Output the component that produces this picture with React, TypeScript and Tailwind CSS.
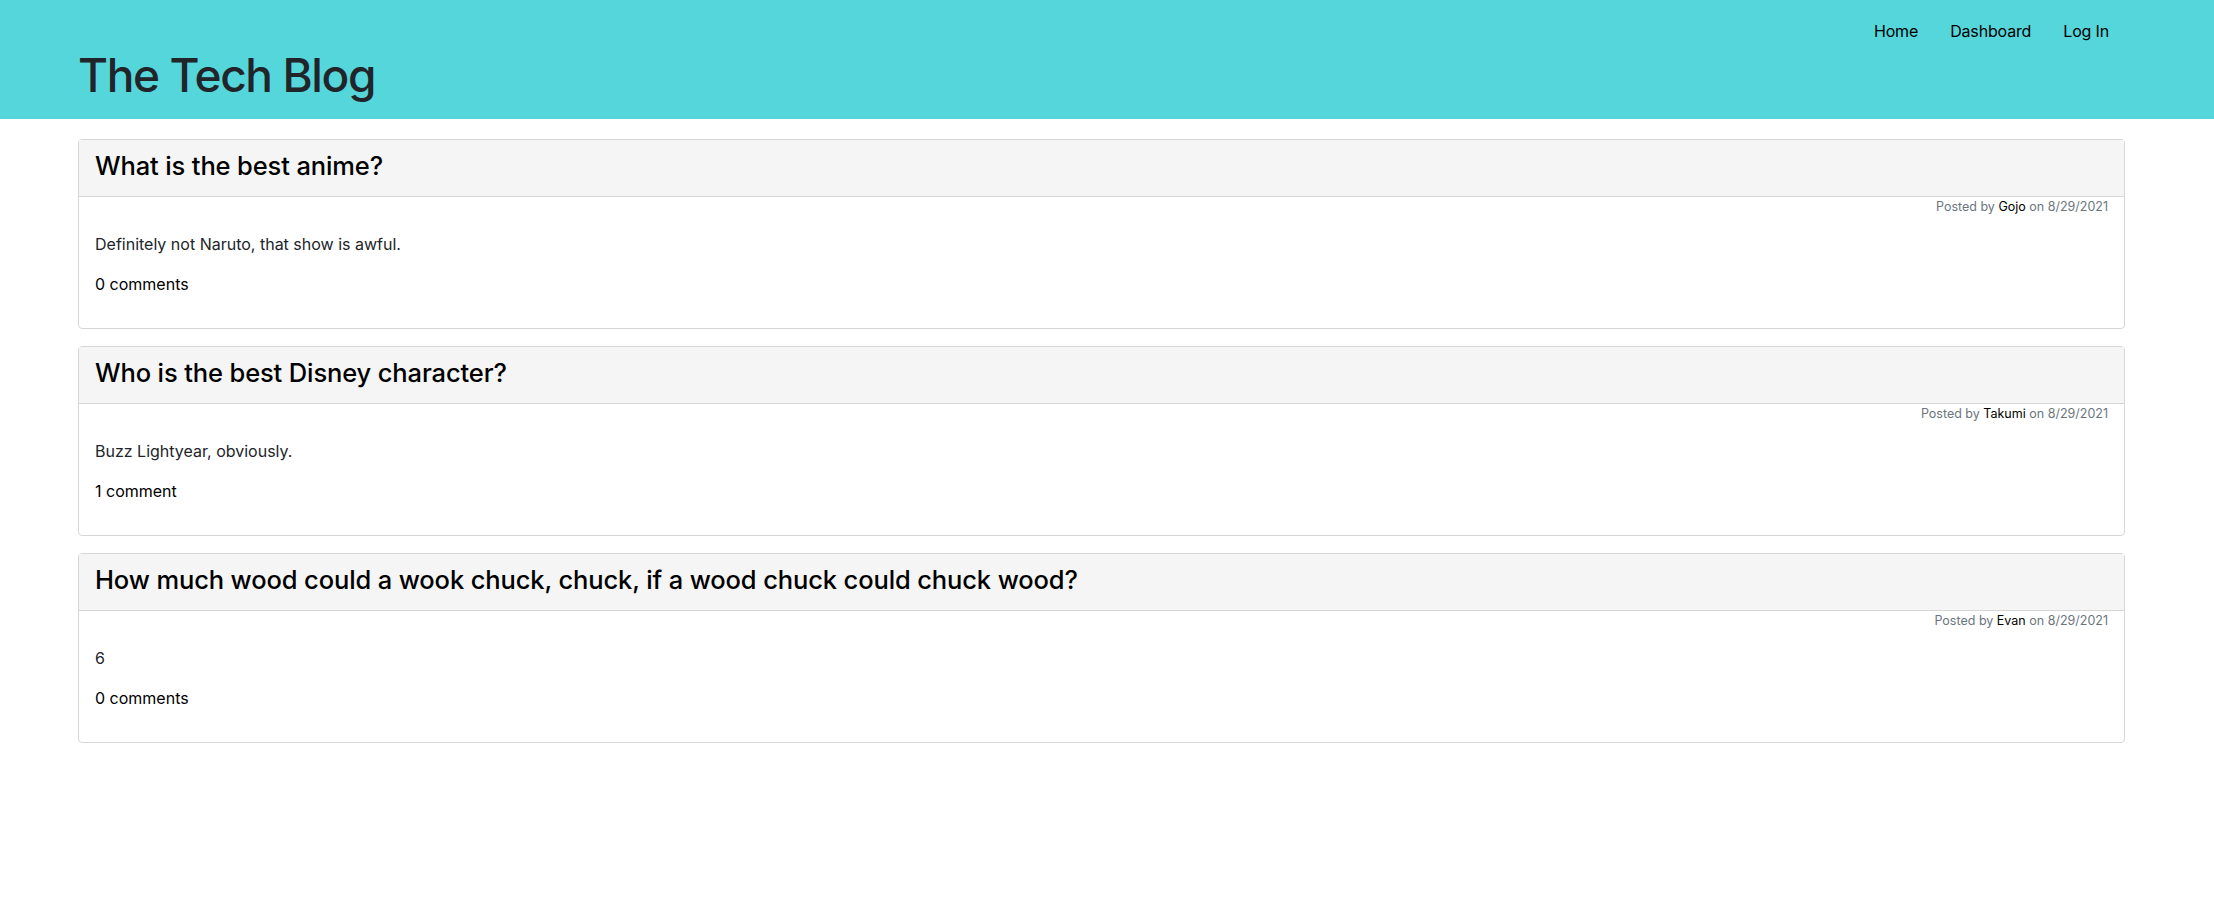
import React from 'react';

type Post = {
  id: number;
  title: string;
  author: string;
  date: string;
  body: string;
  comments: number;
};

const posts: Post[] = [
  { id: 1, title: 'What is the best anime?', author: 'Gojo', date: '8/29/2021', body: 'Definitely not Naruto, that show is awful.', comments: 0 },
  { id: 2, title: 'Who is the best Disney character?', author: 'Takumi', date: '8/29/2021', body: 'Buzz Lightyear, obviously.', comments: 1 },
  { id: 3, title: 'How much wood could a wook chuck, chuck, if a wood chuck could chuck wood?', author: 'Evan', date: '8/29/2021', body: '6', comments: 0 },
];

function PostCard({ post }: { post: Post }) {
  return (
    <article className="h-[190px] bg-white border border-[#d6d6d6] rounded-[4px] flex flex-col">
      {/* Card header */}
      <div className="h-[57px] bg-[#f5f5f5] border-b border-[#d6d6d6] px-4 pt-[10px]">
        <h2 className="text-[25.5px] leading-[31px] font-medium tracking-[-0.005em] text-black">{post.title}</h2>
      </div>

      {/* Card body */}
      <div className="px-4">
        <div className="text-right text-[12.5px] leading-[19px] text-[#6c757d]">
          Posted by <span className="text-black">{post.author}</span> on {post.date}
        </div>
        <p className="mt-[16px] text-[16px] leading-6 text-[#212529]">{post.body}</p>
        <p className="mt-[16px] text-[16px] leading-6 text-black">
          {post.comments} {post.comments === 1 ? 'comment' : 'comments'}
        </p>
      </div>
    </article>
  );
}

export default function App() {
  return (
    <div className="min-h-screen w-full bg-white font-['Inter','Liberation_Sans',sans-serif]">
      {/* Top banner */}
      <header className="h-[119px] bg-[#55d6db] pl-[78px] pr-[89px] flex flex-col">
        <nav className="flex justify-end pt-[19px]">
          <a className="px-4 text-[16px] leading-6 tracking-[-0.01em] text-black">Home</a>
          <a className="px-4 text-[16px] leading-6 tracking-[-0.01em] text-black">Dashboard</a>
          <a className="px-4 text-[16px] leading-6 tracking-[-0.01em] text-black">Log In</a>
        </nav>
        <h1 className="mt-[4px] text-[46px] leading-[56px] font-medium tracking-[-0.03em] text-[#212529]">The Tech Blog</h1>
      </header>

      {/* Posts */}
      <main className="pl-[78px] pr-[89px] pt-[20px] flex flex-col gap-[17px]">
        {posts.map((post) => (
          <PostCard key={post.id} post={post} />
        ))}
      </main>
    </div>
  );
}
